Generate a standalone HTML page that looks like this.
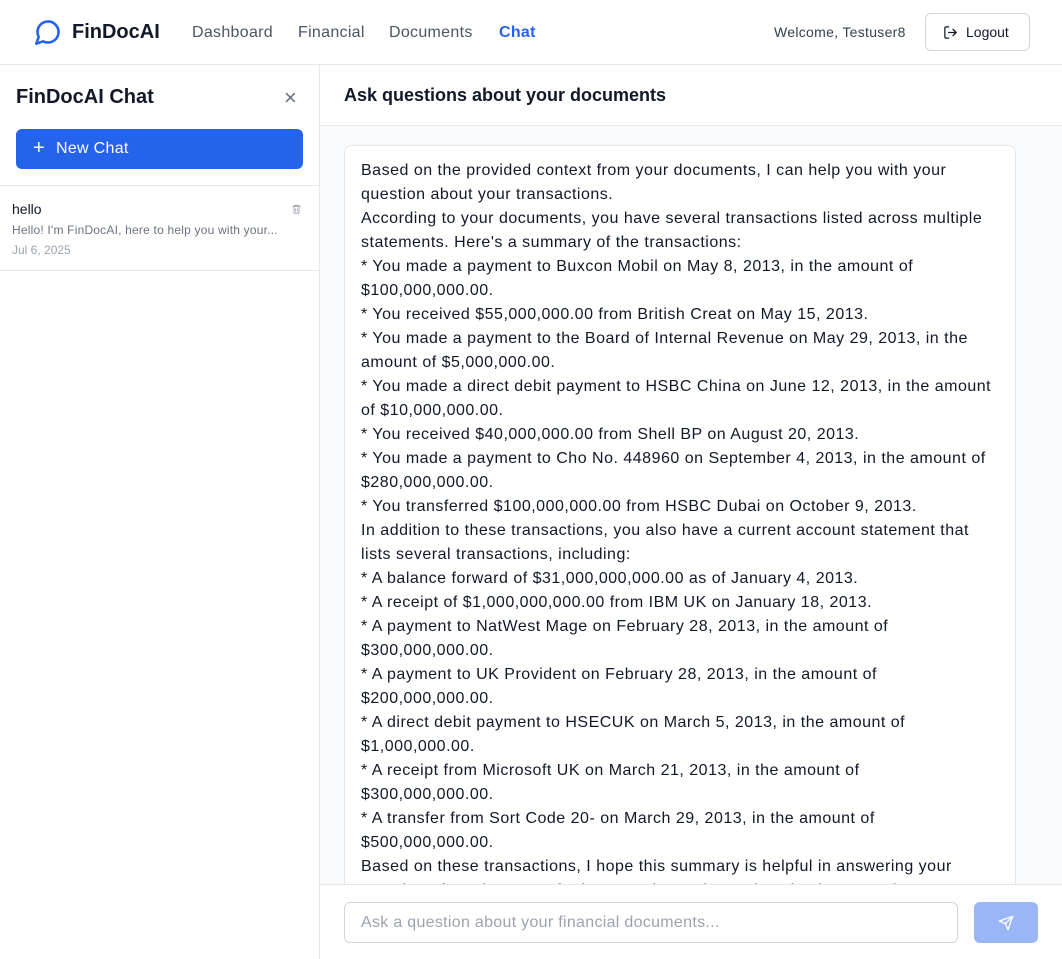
<!DOCTYPE html>
<html><head><meta charset="utf-8">
<style>
*{box-sizing:border-box;margin:0;padding:0}
body{width:1062px;height:959px;overflow:hidden;font-family:"Liberation Sans",sans-serif;background:#fff;color:#111827;position:relative}
.top{position:absolute;left:0;top:0;width:1062px;height:65px;border-bottom:1px solid #e5e7eb;background:#fff}
.logo{position:absolute;left:34px;top:18px}
.brand{position:absolute;left:72px;top:21px;font-size:20px;font-weight:bold;color:#111827}
.nav{position:absolute;top:24px;font-size:16px;color:#4b5563;letter-spacing:0.3px}
.welcome{position:absolute;left:774px;top:24px;font-size:14px;color:#374151;letter-spacing:0.3px}
.logout{position:absolute;left:925px;top:13px;width:105px;height:38px;border:1px solid #d1d5db;border-radius:6px;font-size:14px;color:#111827}
.side{position:absolute;left:0;top:65px;width:320px;height:894px;border-right:1px solid #e5e7eb;background:#fff}
.main{position:absolute;left:320px;top:65px;width:742px;height:894px;background:#f9fafb}
.mh{position:absolute;left:0;top:0;width:742px;height:61px;background:#fff;border-bottom:1px solid #e5e7eb}
.card{position:absolute;left:24px;top:80px;width:672px;height:760px;background:#fff;border:1px solid #e5e7eb;border-radius:8px;padding:13px 16px;font-size:16px;line-height:24px;color:#111827;overflow:hidden;letter-spacing:0.5px;white-space:nowrap}
.bottom{position:absolute;left:0;top:819px;width:742px;height:75px;background:#fff;border-top:1px solid #e5e7eb}
.inp{position:absolute;left:24px;top:17px;width:614px;height:41px;border:1px solid #d1d5db;border-radius:6px;font-size:16px;color:#9ca3af;padding:11px 16px;letter-spacing:0.3px}
.send{position:absolute;left:654px;top:17px;width:64px;height:41px;border-radius:6px;background:#9bb6f6}
</style></head><body>
<div class="top">
<svg class="logo" width="28" height="28" viewBox="0 0 24 24" fill="none" stroke="#2563eb" stroke-width="2.2" stroke-linecap="round" stroke-linejoin="round"><path d="M7.9 20A9 9 0 1 0 4 16.1L2 22Z"/></svg>
<div class="brand">FinDocAI</div>
<div class="nav" style="left:192px">Dashboard</div>
<div class="nav" style="left:298px">Financial</div>
<div class="nav" style="left:389px">Documents</div>
<div class="nav" style="left:499px;color:#2563eb;font-weight:bold">Chat</div>
<div class="welcome">Welcome, Testuser8</div>
<div class="logout"><svg style="position:absolute;left:17px;top:11px" width="15" height="15" viewBox="0 0 24 24" fill="none" stroke="#111827" stroke-width="2" stroke-linecap="round" stroke-linejoin="round"><path d="M9 21H5a2 2 0 0 1-2-2V5a2 2 0 0 1 2-2h4"/><path d="M16 17l5-5-5-5"/><path d="M21 12H9"/></svg><span style="position:absolute;left:40px;top:10px">Logout</span></div>
</div>
<div class="side">
<div style="position:absolute;left:16px;top:21px;font-size:20px;font-weight:bold">FinDocAI Chat</div>
<div style="position:absolute;left:284px;top:20px;font-size:22px;color:#6b7280">×</div>
<div style="position:absolute;left:16px;top:64px;width:287px;height:40px;background:#2563eb;border-radius:6px;color:#fff;font-size:16px"><span style="position:absolute;left:17px;top:8px;font-size:20px;line-height:22px">+</span><span style="position:absolute;left:40px;top:11px;letter-spacing:0.3px">New Chat</span></div>
<div style="position:absolute;left:0;top:120px;width:319px;height:86px;border-top:1px solid #e5e7eb;border-bottom:1px solid #e5e7eb">
<div style="position:absolute;left:12px;top:15px;font-size:14px;color:#111827">hello</div>
<svg style="position:absolute;left:291px;top:17px" width="11" height="12" viewBox="0 0 24 24" fill="none" stroke="#9ca3af" stroke-width="2"><path d="M3 6h18M8 6V4h8v2M6 6l1 15h10l1-15M10 11v6M14 11v6"/></svg>
<div style="position:absolute;left:12px;top:37px;font-size:12px;color:#6b7280;letter-spacing:0.2px">Hello! I'm FinDocAI, here to help you with your...</div>
<div style="position:absolute;left:12px;top:57px;font-size:12px;color:#9ca3af">Jul 6, 2025</div>
</div>
</div>
<div class="main">
<div class="mh"><div style="position:absolute;left:24px;top:20px;font-size:18px;font-weight:bold">Ask questions about your documents</div></div>
<div class="card">Based on the provided context from your documents, I can help you with your<br>question about your transactions.<br>According to your documents, you have several transactions listed across multiple<br>statements. Here's a summary of the transactions:<br>* You made a payment to Buxcon Mobil on May 8, 2013, in the amount of<br>$100,000,000.00.<br>* You received $55,000,000.00 from British Creat on May 15, 2013.<br>* You made a payment to the Board of Internal Revenue on May 29, 2013, in the<br>amount of $5,000,000.00.<br>* You made a direct debit payment to HSBC China on June 12, 2013, in the amount<br>of $10,000,000.00.<br>* You received $40,000,000.00 from Shell BP on August 20, 2013.<br>* You made a payment to Cho No. 448960 on September 4, 2013, in the amount of<br>$280,000,000.00.<br>* You transferred $100,000,000.00 from HSBC Dubai on October 9, 2013.<br>In addition to these transactions, you also have a current account statement that<br>lists several transactions, including:<br>* A balance forward of $31,000,000,000.00 as of January 4, 2013.<br>* A receipt of $1,000,000,000.00 from IBM UK on January 18, 2013.<br>* A payment to NatWest Mage on February 28, 2013, in the amount of<br>$300,000,000.00.<br>* A payment to UK Provident on February 28, 2013, in the amount of<br>$200,000,000.00.<br>* A direct debit payment to HSECUK on March 5, 2013, in the amount of<br>$1,000,000.00.<br>* A receipt from Microsoft UK on March 21, 2013, in the amount of<br>$300,000,000.00.<br>* A transfer from Sort Code 20- on March 29, 2013, in the amount of<br>$500,000,000.00.<br>Based on these transactions, I hope this summary is helpful in answering your<br>question. If you have any further questions, please don't hesitate to ask.</div>
<div class="bottom">
<div class="inp">Ask a question about your financial documents...</div>
<div class="send"><svg style="position:absolute;left:24px;top:13px" width="16" height="16" viewBox="0 0 24 24" fill="none" stroke="#fff" stroke-width="2" stroke-linecap="round" stroke-linejoin="round"><path d="M22 2L11 13"/><path d="M22 2l-7 20-4-9-9-4Z"/></svg></div>
</div>
</div>
</body></html>
